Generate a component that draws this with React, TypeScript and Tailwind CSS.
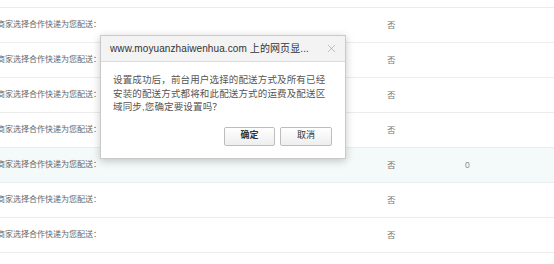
import { X } from 'lucide-react';

const rows = [
  { flag: '否', count: '' },
  { flag: '否', count: '' },
  { flag: '否', count: '' },
  { flag: '否', count: '' },
  { flag: '否', count: '0', active: true },
  { flag: '否', count: '' },
  { flag: '否', count: '' },
];

function ConfirmDialog() {
  return (
    <div className="absolute left-[100px] top-[35px] w-[246px] h-[124px] bg-white border border-[#c9c9c9] shadow-[0_2px_8px_rgba(0,0,0,0.22)] flex flex-col">
      <div className="h-[26px] bg-[#f3f3f3] border-b border-[#dcdcdc] flex items-center pl-[9px] pr-[7px]">
        <span className="flex-1 text-[10px] text-[#333] whitespace-nowrap tracking-[0.1px]">
          www.moyuanzhaiwenhua.com 上的网页显...
        </span>
        <X className="size-[13px] text-[#9a9a9a]" strokeWidth={1.1} />
      </div>
      <div className="flex-1 flex flex-col px-[12px] pt-[11px]">
        <p className="text-[9.5px] leading-[13.5px] text-[#555] tracking-[0.15px]">
          设置成功后，前台用户选择的配送方式及所有已经安装的配送方式都将和此配送方式的运费及配送区域同步,您确定要设置吗？
        </p>
        <div className="flex justify-end gap-[5px] mt-[13px] pr-[1px]">
          <button className="w-[51px] h-[19px] rounded-[2px] border border-[#bdbdbd] bg-gradient-to-b from-white to-[#eeeeee] text-[9px] font-bold text-[#333]">
            确定
          </button>
          <button className="w-[52px] h-[19px] rounded-[2px] border border-[#bdbdbd] bg-gradient-to-b from-white to-[#eeeeee] text-[9px] text-[#333]">
            取消
          </button>
        </div>
      </div>
    </div>
  );
}

export default function App() {
  return (
    <div className="relative w-[554px] h-[264px] bg-white overflow-hidden font-['Liberation_Sans','Noto_Sans_CJK_SC',sans-serif]">
      <div className="pt-[7px] border-b border-[#ececec]">
        {rows.map((row, i) => (
          <div
            key={i}
            className={`grid grid-cols-[387px_78px_1fr] items-center h-[35px] border-t border-[#ececec] text-[8px] text-[#666] ${
              row.active ? 'bg-[#f4f9f9]' : ''
            }`}
          >
            <span className="-ml-[3px] whitespace-nowrap">商家选择合作快递为您配送：</span>
            <span className="text-[8.5px] text-[#777]">{row.flag}</span>
            <span className="text-[8.5px] text-[#888]">{row.count}</span>
          </div>
        ))}
      </div>
      <ConfirmDialog />
    </div>
  );
}
